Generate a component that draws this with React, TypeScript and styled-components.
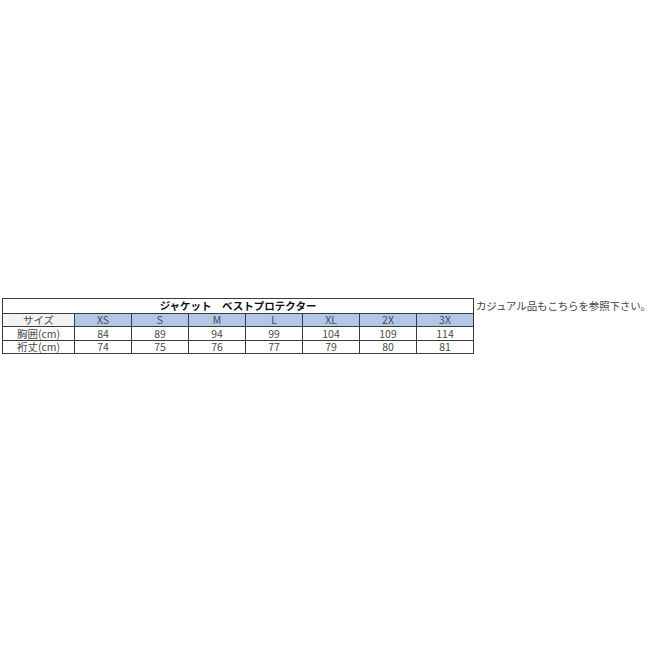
import React from "react";
import styled, { createGlobalStyle } from "styled-components";

const Global = createGlobalStyle`
  html, body { margin: 0; padding: 0; background: #fff; }
  body { font-family: "Noto Sans CJK JP", "Noto Sans", sans-serif; color: #333; }
`;

const Page = styled.div`
  display: flex;
  align-items: flex-start;
  padding: 298px 0 0 2px;
  gap: 2px;
  width: 650px;
  box-sizing: border-box;
`;

const Table = styled.table`
  border-collapse: collapse;
  table-layout: fixed;
  width: 471px;
  border: 1px solid #2a2a2a;
  font-size: 10.5px;
  flex: none;
`;

const Row = styled.tr<{ $h: number }>`
  height: ${(p) => p.$h}px;
`;

const Cell = styled.td<{ $bg?: string; $bold?: boolean }>`
  border: 1px solid #3a3a3a;
  padding: 0;
  line-height: 12px;
  text-align: center;
  vertical-align: middle;
  white-space: nowrap;
  background: ${(p) => p.$bg ?? "#fff"};
  font-weight: ${(p) => (p.$bold ? 700 : 400)};
  color: ${(p) => (p.$bold ? "#111" : "#4a4a4a")};
`;

const Caption = styled.div`
  font-size: 10.5px;
  line-height: 14px;
  padding-top: 1px;
  color: #444;
  white-space: nowrap;
  letter-spacing: -0.15px;
`;

const sizes = ["XS", "S", "M", "L", "XL", "2X", "3X"];
const chest = ["84", "89", "94", "99", "104", "109", "114"];
const sleeve = ["74", "75", "76", "77", "79", "80", "81"];

export default function App() {
  return (
    <>
      <Global />
      <Page>
        <Table>
          <colgroup>
            <col style={{ width: 72 }} />
            {sizes.map((s) => (
              <col key={s} style={{ width: 57 }} />
            ))}
          </colgroup>
          <tbody>
            <Row $h={15}>
              <Cell colSpan={8} $bold>
                ジャケット　ベストプロテクター
              </Cell>
            </Row>
            <Row $h={13}>
              <Cell $bg="#f2f2f2">サイズ</Cell>
              {sizes.map((s) => (
                <Cell key={s} $bg="#b4c6e7">
                  {s}
                </Cell>
              ))}
            </Row>
            <Row $h={14}>
              <Cell>胸囲(cm)</Cell>
              {chest.map((v, i) => (
                <Cell key={i}>{v}</Cell>
              ))}
            </Row>
            <Row $h={13}>
              <Cell>裄丈(cm)</Cell>
              {sleeve.map((v, i) => (
                <Cell key={i}>{v}</Cell>
              ))}
            </Row>
          </tbody>
        </Table>
        <Caption>カジュアル品もこちらを参照下さい。</Caption>
      </Page>
    </>
  );
}
